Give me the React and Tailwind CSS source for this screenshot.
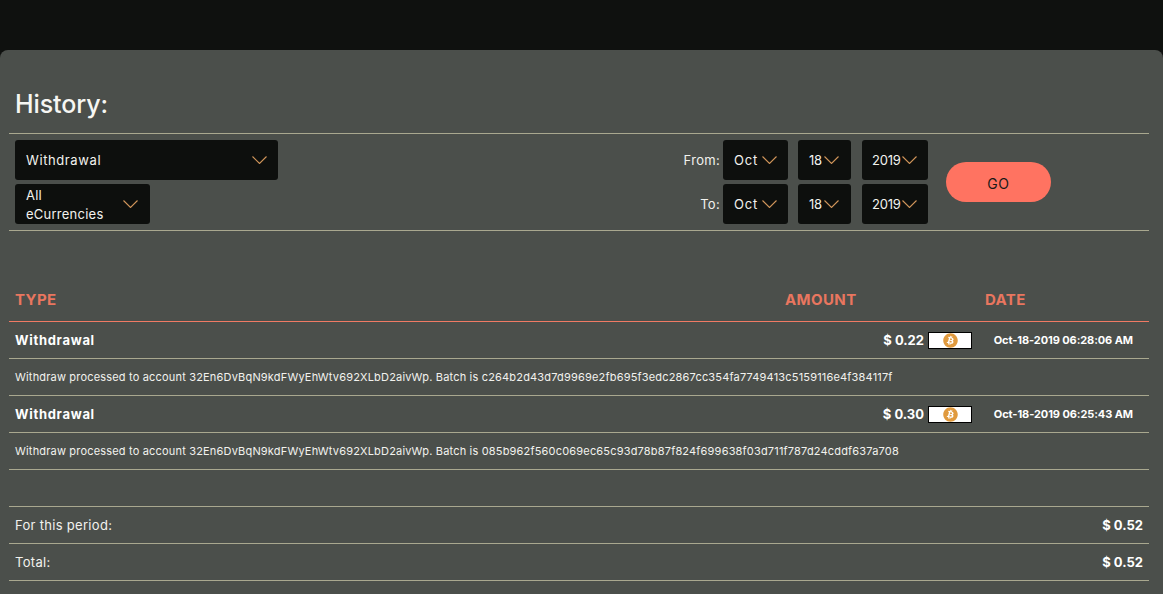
import React from "react";
import { FaBitcoin } from "react-icons/fa";

function Chevron() {
  return (
    <svg width="15" height="8" viewBox="0 0 15 8" fill="none" className="shrink-0">
      <path d="M0.5 0.5L7.5 7.5L14.5 0.5" stroke="#d0955a" strokeWidth="1.1" />
    </svg>
  );
}

function Select({ label, className, textClass }) {
  return (
    <div className={`flex h-10 items-center justify-between rounded-[3px] bg-[#0d0f0d] text-[13px] text-[#f2f2ee] ${className}`}>
      <span className={`pt-[2px] ${textClass}`}>{label}</span>
      <Chevron />
    </div>
  );
}

function DateRow({ label }) {
  return (
    <div className="flex h-10 items-center">
      <span className="w-[60px] pt-[2px] pr-[3px] text-right text-[13px] tracking-[0.3px] text-[#f2f2ee]">{label}</span>
      <Select label="Oct" textClass="tracking-[0.8px]" className="w-[65px] pl-[11px] pr-[11px]" />
      <Select label="18" textClass="tracking-[-0.4px]" className="ml-[10px] w-[53px] pl-[11px] pr-[12px]" />
      <Select label="2019" textClass="tracking-[-0.2px]" className="ml-[11px] w-[66px] pl-[10px] pr-[11px]" />
    </div>
  );
}

function Row({ amount, date }) {
  return (
    <div className="flex h-[37px] items-center border-b border-[#a9a88f] px-[6px] text-white">
      <span className="flex-1 pt-[2px] text-[13px] font-bold tracking-[0.7px]">Withdrawal</span>
      <span className="pt-[2px] text-[13px] font-bold">{amount}</span>
      <span className="ml-[4px] flex h-[17px] w-[44px] items-center justify-center border border-black bg-white">
        <FaBitcoin className="text-[15px] text-[#e09a3e]" />
      </span>
      <span className="w-[171px] pt-[1px] pr-[10px] text-right text-[11px] font-bold tracking-[-0.08px]">{date}</span>
    </div>
  );
}

function Detail({ children }) {
  return (
    <div className="flex h-[37px] items-center border-b border-[#a9a88f] px-[6px] text-[11px] tracking-[0.18px] text-[#f2f2ee]">
      {children}
    </div>
  );
}

function Total({ label }) {
  return (
    <div className="flex h-[37px] items-center justify-between border-b border-[#a9a88f] px-[6px]">
      <span className="pt-[2px] text-[13px] tracking-[0.3px] text-[#f2f2ee]">{label}</span>
      <span className="pt-[2px] text-[13px] font-bold text-white">$ 0.52</span>
    </div>
  );
}

export default function App() {
  return (
    <div className="h-[594px] overflow-hidden bg-[#0f110f] pt-[50px] font-['Inter',sans-serif]">
      <div className="h-[544px] rounded-t-[8px] bg-[#4b4f4b] pl-[9px] pr-[14px]">
        <div className="flex h-[84px] items-end border-b border-[#a9a88f] px-[6px] pb-[14px]">
          <h1 className="text-[25px] leading-[30px] font-medium tracking-[-0.1px] text-[#f6f6f2]">History:</h1>
        </div>

        <div className="flex h-[97px] items-start border-b border-[#a9a88f] px-[6px] pt-[6px]">
          <div className="flex flex-1 flex-col gap-1">
            <Select label="Withdrawal" textClass="tracking-[0.6px]" className="w-[263px] pl-[11px] pr-[11px]" />
            <Select label="All eCurrencies" textClass="tracking-[0.25px]" className="w-[135px] pl-[11px] pr-[12px]" />
          </div>
          <div className="flex flex-col gap-1">
            <DateRow label="From:" />
            <DateRow label="To:" />
          </div>
          <button className="mt-[22px] mr-[92px] ml-[18px] h-10 w-[105px] rounded-[20px] bg-[#ff7361] pt-[2px] text-[14px] tracking-[0.7px] text-[#1a1a18]">
            GO
          </button>
        </div>

        <div className="mt-[56px] flex h-[35px] items-start border-b border-[#f07a64] px-[6px] pt-[3px] text-[15px] leading-5 font-bold tracking-[0.4px] text-[#e9765f]">
          <span className="w-[770px]">TYPE</span>
          <span className="w-[200px]">AMOUNT</span>
          <span>DATE</span>
        </div>

        <Row amount="$ 0.22" date="Oct-18-2019 06:28:06 AM" />
        <Detail>Withdraw processed to account 32En6DvBqN9kdFWyEhWtv692XLbD2aivWp. Batch is c264b2d43d7d9969e2fb695f3edc2867cc354fa7749413c5159116e4f384117f</Detail>
        <Row amount="$ 0.30" date="Oct-18-2019 06:25:43 AM" />
        <Detail>Withdraw processed to account 32En6DvBqN9kdFWyEhWtv692XLbD2aivWp. Batch is 085b962f560c069ec65c93d78b87f824f699638f03d711f787d24cddf637a708</Detail>

        <div className="mt-[36px] border-t border-[#a9a88f]">
          <Total label="For this period:" />
          <Total label="Total:" />
        </div>
      </div>
    </div>
  );
}
